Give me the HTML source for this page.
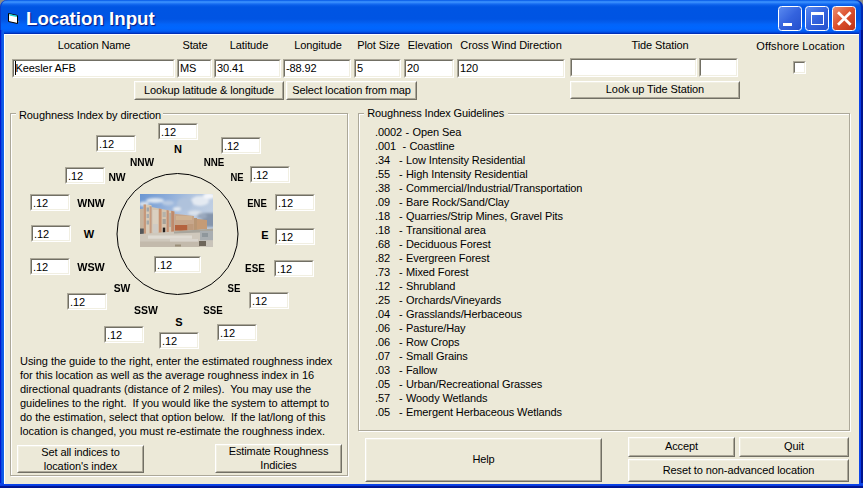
<!DOCTYPE html>
<html><head><meta charset="utf-8"><title>Location Input</title>
<style>
html,body{margin:0;padding:0;}
body{width:863px;height:488px;overflow:hidden;background:#ECE9D8;font-family:"Liberation Sans",sans-serif;font-size:11px;color:#000;position:relative;letter-spacing:-0.1px;}
#win{position:absolute;left:0;top:0;width:863px;height:488px;background:#0B4FE3;overflow:hidden;}
#client{position:absolute;left:4px;top:34px;width:855px;height:449.5px;background:#ECE9D8;box-sizing:border-box;border-left:1px solid #fff;border-top:1px solid #fff;}
#bl{position:absolute;left:0;top:30px;width:4px;height:458px;background:linear-gradient(to right,#0019CF 0,#0019CF 1px,#0B55E5 1.6px,#1062EA 4px);}
#br{position:absolute;left:859px;top:30px;width:4px;height:458px;background:linear-gradient(to left,#001590 0,#00138C 1.6px,#0A3CE8 2.4px,#0C48EA 4px);}
#bb{position:absolute;left:0;top:483px;width:863px;height:5px;background:linear-gradient(to bottom,#0C48EA 0,#0A40E8 2.4px,#00138C 3.6px,#001590 5px);}
#title{position:absolute;left:0;top:0;width:863px;height:34px;border-radius:7px 7px 0 0;box-shadow:inset 1px 0 0 #0A3CC8, inset -2px 0 1px #0028B0;
background:linear-gradient(to bottom,#0058EE 0,#2A82F8 1px,#3C91FD 2.2px,#1E74F4 3.6px,#0A5FEA 5px,#0055E3 7px,#0054E3 19px,#045CEC 22px,#0264FA 24.5px,#0066FF 28px,#0360F6 31px,#0048DC 32.5px,#0030B8 33.5px,#002EB0 34px);}
#corner{position:absolute;left:0;top:0;width:863px;height:10px;background:#8C8C86;}
#ttext{position:absolute;left:26px;top:7px;font-family:"Liberation Sans",sans-serif;font-weight:bold;font-size:18.7px;color:#fff;line-height:24px;white-space:nowrap;text-shadow:1px 1px 1px #0A1883;letter-spacing:0px;}
.abs{position:absolute;}
.lbl{position:absolute;white-space:nowrap;line-height:13px;height:13px;}
.c{text-align:center;}
.b{font-weight:bold;letter-spacing:0;}
.inp{position:absolute;box-sizing:border-box;background:#fff;border:1px solid;border-color:#ACA899 #fff #fff #ACA899;}
.inp i{position:absolute;left:0;top:0;right:0;bottom:0;border:1px solid;border-color:#716F64 #F1EFE2 #F1EFE2 #716F64;font-style:normal;white-space:nowrap;line-height:13px;padding-left:1px;padding-top:1px;overflow:hidden;}
.btn{position:absolute;box-sizing:border-box;background:#ECE9D8;border:1px solid;border-color:#fff #716F64 #716F64 #fff;}
.btn i{position:absolute;left:0;top:0;right:0;bottom:0;border:1px solid;border-color:#F1EFE2 #ACA899 #ACA899 #F1EFE2;font-style:normal;display:flex;align-items:center;justify-content:center;text-align:center;line-height:14px;}
.grp{position:absolute;box-sizing:border-box;border:1px solid #ACA899;box-shadow:1px 1px 0 #fff, inset 1px 1px 0 #fff;}
.gt{position:absolute;background:#ECE9D8;white-space:nowrap;line-height:13px;padding:0 2px;}
.tb{position:absolute;top:6px;width:24px;height:25px;box-sizing:border-box;border:1px solid #fff;border-radius:3.5px;}
.n{display:inline-block;}
pre{margin:0;font-family:"Liberation Sans",sans-serif;font-size:11px;line-height:14px;position:absolute;}
</style></head><body>
<div id="win">
<div id="corner"></div>
<div id="title"></div>
<svg class="abs" style="left:7px;top:12px" width="14" height="14" viewBox="0 0 14 14"><polygon points="1.5,1.5 10.5,3.5 10.5,11.5 1.5,9.5" fill="#fff" stroke="#000" stroke-width="1"/><path d="M2.5 2.7 L10 4.4" stroke="#19D6D6" stroke-width="1.4"/><path d="M11 9 L12.5 9.5 L11 10.5Z" fill="#8a8a6a"/></svg>
<div id="ttext">Location Input</div>
<div class="tb" style="left:778px;background:linear-gradient(135deg,#5A8AF0,#3463DE 50%,#2450CC);"><div class="abs" style="left:4px;top:16px;width:9px;height:3px;background:#fff"></div></div>
<div class="tb" style="left:805px;background:linear-gradient(135deg,#5A8AF0,#3463DE 50%,#2450CC);"><div class="abs" style="left:5px;top:5px;width:13px;height:13px;box-sizing:border-box;border:1px solid #fff;border-top-width:3px"></div></div>
<div class="tb" style="left:832px;background:linear-gradient(135deg,#EC8F70,#DB4F2C 50%,#BE3418);"><svg class="abs" style="left:3px;top:3px" width="18" height="18" viewBox="0 0 18 18"><path d="M2 2.2 L14.6 14.8 M14.6 2.2 L2 14.8" stroke="#fff" stroke-width="2.7" stroke-linecap="butt"/></svg></div>
<div id="bl"></div><div id="br"></div><div id="bb"></div><div id="client"></div>

<!-- top labels -->
<div class="lbl c" style="left:13px;width:162px;top:39px">Location Name</div>
<div class="lbl c" style="left:175px;width:40px;top:39px">State</div>
<div class="lbl c" style="left:214px;width:70px;top:39px">Latitude</div>
<div class="lbl c" style="left:283px;width:70px;top:39px">Longitude</div>
<div class="lbl c" style="left:353.5px;width:50px;top:39px">Plot Size</div>
<div class="lbl c" style="left:404px;width:52px;top:39px">Elevation</div>
<div class="lbl c" style="left:457px;width:108px;top:39px">Cross Wind Direction</div>
<div class="lbl c" style="left:570px;width:180px;top:39px">Tide Station</div>
<div class="lbl c" style="left:750px;width:101px;top:40px;letter-spacing:0.1px">Offshore Location</div>

<div class="inp" style="left:12px;top:59px;width:163px;height:19px"><i style="padding-left:1.6px">Keesler AFB</i><b style="position:absolute;left:2px;top:1px;width:1px;height:14px;background:#000"></b></div>
<div class="inp" style="left:177px;top:59px;width:35px;height:19px"><i>MS</i></div>
<div class="inp" style="left:214px;top:59px;width:67px;height:19px"><i>30.41</i></div>
<div class="inp" style="left:283px;top:59px;width:68px;height:19px"><i>-88.92</i></div>
<div class="inp" style="left:354px;top:59px;width:47px;height:19px"><i>5</i></div>
<div class="inp" style="left:404px;top:59px;width:50px;height:19px"><i>20</i></div>
<div class="inp" style="left:457px;top:59px;width:108px;height:19px"><i>120</i></div>
<div class="inp" style="left:570px;top:58px;width:127px;height:19px"><i></i></div>
<div class="inp" style="left:699px;top:58px;width:39px;height:19px"><i></i></div>
<div class="inp" style="left:793px;top:61px;width:13px;height:13px"><i></i></div>

<div class="btn" style="left:134px;top:81px;width:150px;height:19px"><i style="padding-bottom:1px">Lookup latitude &amp; longitude</i></div>
<div class="btn" style="left:286px;top:81px;width:131px;height:19px"><i style="padding-bottom:1px">Select location from map</i></div>
<div class="btn" style="left:570px;top:81px;width:170px;height:18px"><i style="padding-bottom:2px">Look up Tide Station</i></div>

<!-- group 1 -->
<div class="grp" style="left:10px;top:113px;width:338px;height:363px"></div>
<div class="gt" style="left:16px;top:109px;padding-left:3px">Roughness Index by direction</div>

<svg class="abs" style="left:115px;top:172px" width="125" height="125"><circle cx="62.5" cy="62" r="60.5" fill="none" stroke="#000" stroke-width="1"/></svg>

<svg class="abs" style="left:140px;top:194px" width="73" height="53" viewBox="0 0 73 53">
<defs><linearGradient id="sky" x1="0" y1="0" x2="1" y2="0.5"><stop offset="0" stop-color="#6A96D2"/><stop offset="0.35" stop-color="#8FAEDA"/><stop offset="0.6" stop-color="#B2C5DF"/><stop offset="1" stop-color="#C4D2E4"/></linearGradient>
<filter id="bl" x="-5%" y="-5%" width="110%" height="110%"><feGaussianBlur stdDeviation="0.55"/></filter>
<filter id="bl2" x="-20%" y="-20%" width="140%" height="140%"><feGaussianBlur stdDeviation="1.3"/></filter>
<clipPath id="cp"><rect width="73" height="53"/></clipPath></defs>
<g clip-path="url(#cp)">
<rect width="73" height="53" fill="url(#sky)"/>
<g filter="url(#bl2)">
<ellipse cx="15" cy="6.5" rx="9" ry="2.6" fill="#DDE6F1"/>
<ellipse cx="4" cy="10" rx="5" ry="2.5" fill="#D5DFEC"/>
<ellipse cx="28" cy="9" rx="6" ry="2.5" fill="#B9CBE3"/>
<ellipse cx="60" cy="7" rx="9" ry="5" fill="#E4EAF2"/>
<ellipse cx="69" cy="2" rx="6" ry="3" fill="#F4F6FA"/>
<ellipse cx="45" cy="10" rx="8" ry="6" fill="#AFC2DC"/>
<ellipse cx="37" cy="15" rx="4" ry="2" fill="#E3E9F1"/>
<ellipse cx="55" cy="19" rx="7" ry="2.5" fill="#DCE3EC"/>
<rect x="62" y="19" width="13" height="14" fill="#8595AC"/>
<ellipse cx="62" cy="22" rx="5" ry="3" fill="#9AA9BE"/>
</g>
<g filter="url(#bl)">
<polygon points="0,15 4,14.5 4,40 0,40" fill="#C6B49E"/>
<polygon points="3.6,10.5 11.5,11 11.5,40 3.6,40" fill="#D7CBB9"/>
<polygon points="11.5,13 34.4,17.4 34.4,38 11.5,40" fill="#D3C4B0"/>
<polygon points="3.6,10.5 6,10.6 6,40 3.6,40" fill="#C6987A"/>
<polygon points="9.6,12 11.6,12.4 11.6,40 9.6,40" fill="#C89C7E"/>
<polygon points="18.8,14.4 21.6,15 21.6,39 18.8,39.3" fill="#C9906E"/>
<polygon points="26.6,16 28.8,16.4 28.8,38.4 26.6,38.6" fill="#C49072"/>
<polygon points="31.2,16.8 34.4,17.4 34.4,38 31.2,38.2" fill="#BF8A6C"/>
<rect x="6.6" y="13.5" width="2.4" height="4" fill="#9FA6AA"/>
<rect x="6.6" y="20" width="2.4" height="4" fill="#A9ADAE"/>
<rect x="6.6" y="26.5" width="2.4" height="4" fill="#A4A8A8"/>
<rect x="22.6" y="18" width="3.2" height="5" fill="#B4B2AA"/>
<rect x="22.6" y="25" width="3.2" height="5" fill="#A5A29A"/>
<rect x="29.2" y="19" width="1.8" height="14" fill="#B3ACA0"/>
<rect x="12.6" y="16" width="5.6" height="22" fill="#DAD0C0"/>
<rect x="13" y="30" width="5" height="9" fill="#CFCBC4"/>
<polygon points="34.4,19.8 54,22 54,37 34.4,38" fill="#C7A78C"/>
<rect x="36" y="22" width="16" height="4" fill="#D0B393"/>
<rect x="35" y="31" width="12.5" height="5.5" fill="#B4623E"/>
<rect x="47.5" y="30" width="6" height="6" fill="#BE9A7C"/>
<polygon points="54,24.5 67,26 67,35 54,36.5" fill="#C59B76"/>
<rect x="54" y="24" width="3" height="12" fill="#B99674"/>
<rect x="22.8" y="33.6" width="2.4" height="6" fill="#231F1E"/>
<rect x="0" y="34.5" width="3.8" height="5.5" fill="#55585A"/>
<polygon points="0,40 34,37.6 73,35 73,53 0,53" fill="#CFC8BC"/>
<polygon points="34,37.4 73,34.5 73,38 34,39.5" fill="#A8A59C"/>
<rect x="0" y="47.5" width="60" height="5.5" fill="#C3BAAC"/>
<rect x="8" y="41.5" width="44" height="3.2" fill="#DFDBD3"/>
<rect x="30" y="45" width="28" height="2.5" fill="#D9D4CC"/>
<rect x="60" y="37" width="13" height="9.5" fill="#A9AEB1"/>
<rect x="62" y="39" width="6" height="4" fill="#8F979C"/>
<rect x="59" y="47" width="7" height="5" fill="#6E665A"/>
<rect x="66" y="46.5" width="7" height="6.5" fill="#C9C4BA"/>
<rect x="35" y="50.5" width="6" height="2" fill="#9A8E78"/>
</g>
</g>
</svg>

<!-- compass inputs -->
<div class="inp" style="left:158px;top:123px;width:40px;height:17px"><i>.12</i></div>
<div class="inp" style="left:96px;top:135px;width:40px;height:17px"><i>.12</i></div>
<div class="inp" style="left:221px;top:137px;width:40px;height:17px"><i>.12</i></div>
<div class="inp" style="left:65px;top:167px;width:40px;height:17px"><i>.12</i></div>
<div class="inp" style="left:250px;top:166px;width:40px;height:17px"><i>.12</i></div>
<div class="inp" style="left:30px;top:194px;width:40px;height:17px"><i>.12</i></div>
<div class="inp" style="left:275px;top:194px;width:40px;height:17px"><i>.12</i></div>
<div class="inp" style="left:31px;top:225px;width:40px;height:17px"><i>.12</i></div>
<div class="inp" style="left:275px;top:228px;width:40px;height:17px"><i>.12</i></div>
<div class="inp" style="left:30px;top:258px;width:40px;height:17px"><i>.12</i></div>
<div class="inp" style="left:274px;top:260px;width:40px;height:17px"><i>.12</i></div>
<div class="inp" style="left:67px;top:293px;width:40px;height:17px"><i>.12</i></div>
<div class="inp" style="left:249px;top:292px;width:40px;height:17px"><i>.12</i></div>
<div class="inp" style="left:104px;top:326px;width:40px;height:17px"><i>.12</i></div>
<div class="inp" style="left:217px;top:324px;width:40px;height:17px"><i>.12</i></div>
<div class="inp" style="left:159px;top:332px;width:40px;height:17px"><i>.12</i></div>
<div class="inp" style="left:154px;top:256px;width:47px;height:17px"><i>.12</i></div>

<!-- compass labels -->
<div class="lbl b c" style="left:158px;width:40px;top:143px">N</div>
<div class="lbl b c" style="left:122px;width:40px;top:156px;transform:scaleX(0.92)">NNW</div>
<div class="lbl b c" style="left:194px;width:40px;top:156px;transform:scaleX(0.89)">NNE</div>
<div class="lbl b c" style="left:97px;width:40px;top:171px;transform:scaleX(0.94)">NW</div>
<div class="lbl b c" style="left:217px;width:40px;top:171px;transform:scaleX(0.86)">NE</div>
<div class="lbl b c" style="left:71px;width:40px;top:197px;transform:scaleX(0.96)">WNW</div>
<div class="lbl b c" style="left:237px;width:40px;top:197px;transform:scaleX(0.87)">ENE</div>
<div class="lbl b c" style="left:69px;width:40px;top:228px">W</div>
<div class="lbl b c" style="left:245px;width:40px;top:229px">E</div>
<div class="lbl b c" style="left:71px;width:40px;top:261px;transform:scaleX(0.98)">WSW</div>
<div class="lbl b c" style="left:235px;width:40px;top:262px;transform:scaleX(0.9)">ESE</div>
<div class="lbl b c" style="left:102px;width:40px;top:282px;transform:scaleX(0.94)">SW</div>
<div class="lbl b c" style="left:214px;width:40px;top:282px;transform:scaleX(0.88)">SE</div>
<div class="lbl b c" style="left:126px;width:40px;top:304px;transform:scaleX(0.95)">SSW</div>
<div class="lbl b c" style="left:193px;width:40px;top:304px;transform:scaleX(0.88)">SSE</div>
<div class="lbl b c" style="left:159px;width:40px;top:316px">S</div>

<pre style="left:20px;top:354px;letter-spacing:-0.05px">Using the guide to the right, enter the estimated roughness index
for this location as well as the average roughness index in 16
directional quadrants (distance of 2 miles).  You may use the
guidelines to the right.  If you would like the system to attempt to
do the estimation, select that option below.  If the lat/long of this
location is changed, you must re-estimate the roughness index.</pre>

<div class="btn" style="left:17px;top:445px;width:127px;height:28px"><i>Set all indices to<br>location's index</i></div>
<div class="btn" style="left:215px;top:444px;width:127px;height:29px"><i style="padding-bottom:1px">Estimate Roughness<br>Indicies</i></div>

<!-- group 2 -->
<div class="grp" style="left:358px;top:113px;width:492px;height:318px"></div>
<div class="gt" style="left:364px;top:107px;padding-left:3.2px;padding-right:3.4px;letter-spacing:-0.14px">Roughness Index Guidelines</div>
<pre style="left:375px;top:125px"><span class="n" style="width:30.5px">.0002</span><span class="n" style="width:7px">-</span>Open Sea
<span class="n" style="width:27.5px">.001</span><span class="n" style="width:7px">-</span>Coastline
<span class="n" style="width:24px">.34</span><span class="n" style="width:7px">-</span>Low Intensity Residential
<span class="n" style="width:24px">.55</span><span class="n" style="width:7px">-</span>High Intensity Residential
<span class="n" style="width:24px">.38</span><span class="n" style="width:7px">-</span>Commercial/Industrial/Transportation
<span class="n" style="width:24px">.09</span><span class="n" style="width:7px">-</span>Bare Rock/Sand/Clay
<span class="n" style="width:24px">.18</span><span class="n" style="width:7px">-</span>Quarries/Strip Mines, Gravel Pits
<span class="n" style="width:24px">.18</span><span class="n" style="width:7px">-</span>Transitional area
<span class="n" style="width:24px">.68</span><span class="n" style="width:7px">-</span>Deciduous Forest
<span class="n" style="width:24px">.82</span><span class="n" style="width:7px">-</span>Evergreen Forest
<span class="n" style="width:24px">.73</span><span class="n" style="width:7px">-</span>Mixed Forest
<span class="n" style="width:24px">.12</span><span class="n" style="width:7px">-</span>Shrubland
<span class="n" style="width:24px">.25</span><span class="n" style="width:7px">-</span>Orchards/Vineyards
<span class="n" style="width:24px">.04</span><span class="n" style="width:7px">-</span>Grasslands/Herbaceous
<span class="n" style="width:24px">.06</span><span class="n" style="width:7px">-</span>Pasture/Hay
<span class="n" style="width:24px">.06</span><span class="n" style="width:7px">-</span>Row Crops
<span class="n" style="width:24px">.07</span><span class="n" style="width:7px">-</span>Small Grains
<span class="n" style="width:24px">.03</span><span class="n" style="width:7px">-</span>Fallow
<span class="n" style="width:24px">.05</span><span class="n" style="width:7px">-</span>Urban/Recreational Grasses
<span class="n" style="width:24px">.57</span><span class="n" style="width:7px">-</span>Woody Wetlands
<span class="n" style="width:24px">.05</span><span class="n" style="width:7px">-</span>Emergent Herbaceous Wetlands</pre>

<div class="btn" style="left:365px;top:438px;width:237px;height:43.5px"><i style="padding-bottom:2px">Help</i></div>
<div class="btn" style="left:628px;top:437px;width:107px;height:20px"><i style="padding-bottom:2px">Accept</i></div>
<div class="btn" style="left:739px;top:437px;width:110px;height:20px"><i style="padding-bottom:2px">Quit</i></div>
<div class="btn" style="left:628px;top:459px;width:221px;height:22.7px"><i>Reset to non-advanced location</i></div>
</div>
</body></html>
